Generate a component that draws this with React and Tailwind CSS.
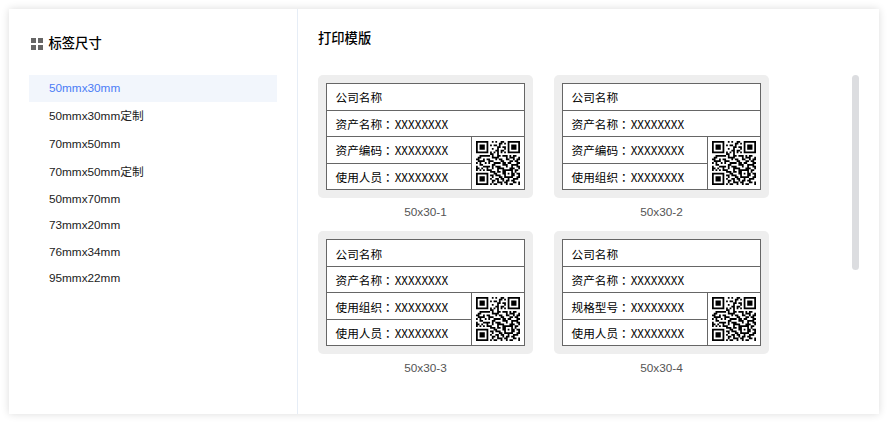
const sizes = [
  { label: '50mmx30mm', active: true },
  { label: '50mmx30mm', custom: true },
  { label: '70mmx50mm' },
  { label: '70mmx50mm', custom: true },
  { label: '50mmx70mm' },
  { label: '73mmx20mm' },
  { label: '76mmx34mm' },
  { label: '95mmx22mm' },
];

const templates = [
  { name: '50x30-1', fields: ['资产编码', '使用人员'] },
  { name: '50x30-2', fields: ['资产编码', '使用组织'] },
  { name: '50x30-3', fields: ['使用组织', '使用人员'] },
  { name: '50x30-4', fields: ['规格型号', '使用人员'] },
];

const qrRows = [
  '1111111001010011001111111',
  '1000001000000110101000001',
  '1011101010110100001011101',
  '1011101000001101101011101',
  '1011101001001000101011101',
  '1000001000011011001000001',
  '1111111010101010101111111',
  '0000000011001000000000000',
  '0011111101001101110101100',
  '0110000001111000010111001',
  '1100101100010110011001011',
  '0111100111000011000110110',
  '1010010100111101101100011',
  '0011000001100001110011110',
  '1000111101011100010010011',
  '1101001001001111000111001',
  '1010101110001001111110110',
  '0000000011101101100010100',
  '1111111000110001101011011',
  '1000001011011100100011001',
  '1011101001000110111110011',
  '1011101010011011001001110',
  '1011101001101001011011000',
  '1000001001001110110001101',
  '1111111010110010010110001',
];

const qrPath = qrRows
  .map((row, y) =>
    [...row.matchAll(/1+/g)].map((m) => `M${m.index} ${y}h${m[0].length}v1h-${m[0].length}z`).join('')
  )
  .join('');

function QrCode() {
  return (
    <svg viewBox="0 0 25 25" className="h-[44px] w-[44px]" fill="#000">
      <path d={qrPath} />
    </svg>
  );
}

function Field({ label }) {
  return (
    <div className="flex items-center pl-[8.5px]">
      <span>{label}</span>
      <span className="font-['Noto_Sans_CJK_TC',sans-serif]">：</span>
      <span className="ml-px">XXXXXXXX</span>
    </div>
  );
}

function Template({ name, fields }) {
  return (
    <div className="flex h-[156.4px] w-[215px] flex-col">
      <div className="h-[123px] rounded-[5px] bg-[#eeeeee] p-2">
        <div className="grid h-[107px] grid-rows-[27px_26px_1fr] divide-y divide-[#666] border border-[#666] bg-white font-['Noto_Sans_CJK_SC',sans-serif] text-[11.65px] leading-none text-black">
          <div className="flex items-center pl-[8.5px]">公司名称</div>
          <Field label="资产名称" />
          <div className="flex">
            <div className="grid w-[145px] grid-rows-[27px_1fr] divide-y divide-[#666] border-r border-[#666]">
              <Field label={fields[0]} />
              <Field label={fields[1]} />
            </div>
            <div className="flex flex-1 items-center justify-center">
              <QrCode />
            </div>
          </div>
        </div>
      </div>
      <div className="pt-[7px] text-center text-[11.8px] leading-[15px] text-[#555]">{name}</div>
    </div>
  );
}

export default function App() {
  return (
    <div className="h-[423px] w-[888px] bg-white pt-[9px] pl-[9px] font-['Liberation_Sans','Noto_Sans_CJK_SC',sans-serif]">
      <div className="flex h-[405px] w-[870px] bg-white shadow-[0_0_8px_rgba(0,0,0,0.14)]">
        <aside className="w-[289px] border-r border-[#e6edf6] pt-[25px]">
          <h2 className="flex h-5 items-center pl-[22px] text-[13.3px] font-medium text-black">
            <span className="mr-[5.5px] mb-px grid grid-cols-2 gap-[2px]">
              <i className="h-[5px] w-[5px] bg-[#666]" />
              <i className="h-[5px] w-[5px] bg-[#666]" />
              <i className="h-[5px] w-[5px] bg-[#666]" />
              <i className="h-[5px] w-[5px] bg-[#666]" />
            </span>
            标签尺寸
          </h2>
          <ul className="mt-[21px] ml-5 w-[248px] text-[11.75px] text-[#222]">
            {sizes.map(({ label, active, custom }, i) => (
              <li
                key={i}
                className={
                  'flex items-center pl-5 ' +
                  (custom ? 'h-[28.6px] pt-px ' : 'h-[26.5px] ') +
                  (active ? 'bg-[#f2f6fc] text-[#4a7cf6]' : '')
                }
              >
                {label}
                {custom && '定制'}
              </li>
            ))}
          </ul>
        </aside>
        <main className="flex-1 pt-5 pl-5">
          <h2 className="h-5 text-[13.3px] leading-5 font-medium text-black">打印模版</h2>
          <div className="mt-[26px] flex justify-between pr-5">
            <div className="grid grid-cols-[215px_215px] gap-x-[21px]">
              {templates.map((t) => (
                <Template key={t.name} {...t} />
              ))}
            </div>
            <div className="h-[195px] w-[7px] rounded-full bg-[#dcdde0]" />
          </div>
        </main>
      </div>
    </div>
  );
}
